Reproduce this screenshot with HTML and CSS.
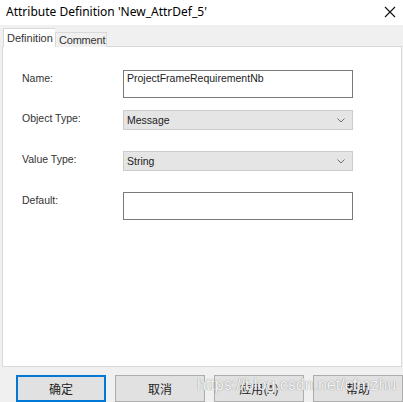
FILE: index.html
```html
<!DOCTYPE html>
<html lang="en">
<head>
    <meta charset="UTF-8">
    <title>Attribute Definition</title>
    <link rel="stylesheet" href="styles.css">
</head>
<body>

<div class="dialog">
    <div class="titlebar">
        <span class="title">Attribute Definition 'New_AttrDef_5'</span>
        <svg class="close" width="12" height="12" viewBox="0 0 12 12">
            <path d="M1 1 L11 11 M11 1 L1 11" stroke="#111" stroke-width="1.1" fill="none"/>
        </svg>
    </div>

    <div class="tabs">
        <div class="tab active">Definition</div>
        <div class="tab">Comment</div>
    </div>

    <div class="panel">
        <div class="row row-input">
            <label class="label">Name:</label>
            <div class="textbox">ProjectFrameRequirementNb</div>
        </div>
        <div class="row row-combo">
            <label class="label">Object Type:</label>
            <div class="combo">
                <span>Message</span>
                <svg class="chevron" width="8" height="5" viewBox="0 0 8 5">
                    <path d="M0.5 0.5 L4 4 L7.5 0.5" stroke="#6d6d6d" stroke-width="1" fill="none"/>
                </svg>
            </div>
        </div>
        <div class="row row-combo">
            <label class="label">Value Type:</label>
            <div class="combo">
                <span>String</span>
                <svg class="chevron" width="8" height="5" viewBox="0 0 8 5">
                    <path d="M0.5 0.5 L4 4 L7.5 0.5" stroke="#6d6d6d" stroke-width="1" fill="none"/>
                </svg>
            </div>
        </div>
        <div class="row row-input">
            <label class="label">Default:</label>
            <div class="textbox"></div>
        </div>
    </div>

    <div class="buttons">
        <button class="btn default">确定</button>
        <button class="btn">取消</button>
        <button class="btn">应用(A)</button>
        <button class="btn">帮助</button>
    </div>

    <div class="watermark">https://blog.csdn.net/cfmzhu</div>
</div>

</body>
</html>
```

FILE: styles.css
```css
* {
    margin: 0;
    padding: 0;
    box-sizing: border-box;
}

body {
    background-color: #f0f0f0;
    font-family: "Liberation Sans", Arial, sans-serif;
    font-size: 10.5px;
    color: #1a1a1a;
}

.dialog {
    position: relative;
    width: 403px;
    height: 402px;
    overflow: hidden;
}

.titlebar {
    height: 25px;
    background: #ffffff;
    display: flex;
    align-items: center;
    justify-content: space-between;
    padding: 0 7px 2px 6px;
}

.title {
    font-family: "Noto Sans", sans-serif;
    font-size: 12px;
    color: #000;
}

.tabs {
    display: flex;
    align-items: flex-end;
    height: 21px;
    padding-left: 3px;
}

.tab {
    width: 52px;
    height: 15px;
    padding: 0 3px;
    line-height: 14px;
    font-size: 11px;
    letter-spacing: -0.2px;
    background: #f0f0f0;
    border: 1px solid #d9d9d9;
    border-bottom: none;
    color: #333;
    margin-bottom: -1px;
}

.tab.active {
    height: 19px;
    padding: 2px 3px 0 3px;
    background: #ffffff;
    position: relative;
    z-index: 1;
    border-right: none;
    letter-spacing: 0;
}

.panel {
    margin: 0 1px 0 2px;
    height: 321px;
    background: #ffffff;
    border: 1px solid #d9d9d9;
    padding: 23px 0 0 19px;
}

.row {
    display: flex;
    align-items: flex-start;
}

.row-input {
    margin-bottom: 12px;
}

.row-combo {
    margin-bottom: 21px;
}

.label {
    width: 101px;
    padding-top: 1px;
    line-height: 14px;
    color: #333;
}

.textbox {
    width: 230px;
    height: 28px;
    border: 1px solid #7a7a7a;
    padding: 0 3px;
    line-height: 14px;
    color: #222;
}

.combo {
    width: 230px;
    height: 20px;
    background: #e5e5e5;
    border: 1px solid #cccccc;
    display: flex;
    align-items: center;
    justify-content: space-between;
    padding: 0 7px 0 3px;
    color: #222;
}

.buttons {
    display: flex;
    gap: 9px;
    padding: 8px 0 0 16px;
}

.btn {
    width: 90px;
    height: 27px;
    background: #e1e1e1;
    border: 1px solid #adadad;
    font-family: "Noto Sans CJK SC", sans-serif;
    font-size: 12px;
    color: #222;
}

.btn.default {
    border: 2px solid #0078d7;
}

.watermark {
    position: absolute;
    left: 197px;
    top: 376px;
    font-family: "Liberation Sans", Arial, sans-serif;
    font-size: 16px;
    color: rgba(255, 255, 255, 0.9);
    text-shadow: 0 0 1px #9a9a9a, 0 0 1px #9a9a9a;
}
```
